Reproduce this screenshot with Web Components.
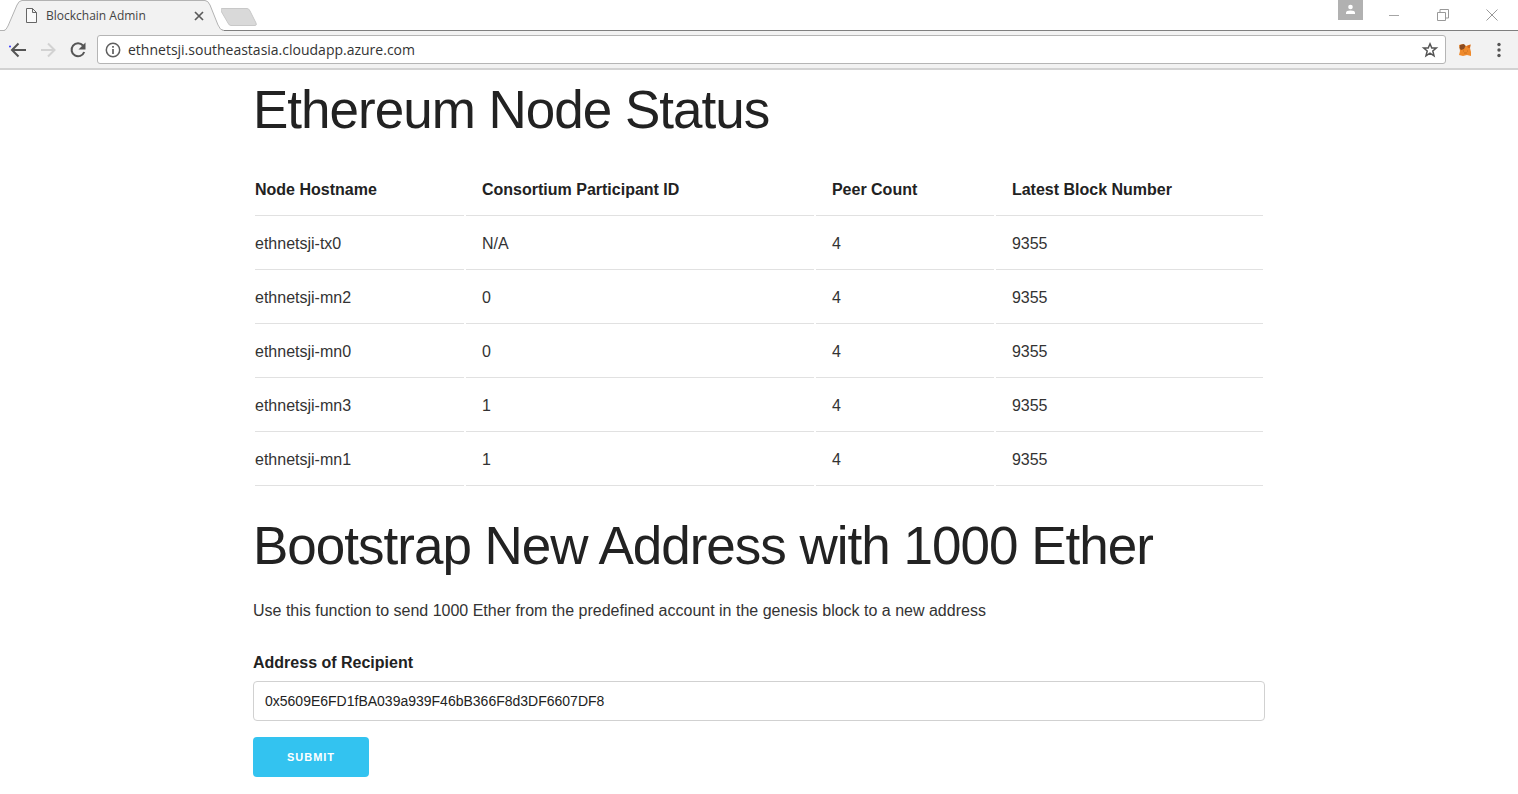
<!DOCTYPE html>
<html lang="en">
<head>
<meta charset="utf-8">
<title>Blockchain Admin</title>
<style>
  body { margin: 0; background: #fff; color: #222; font: 16px/26px "Liberation Sans", Arial, sans-serif; }
</style>
</head>
<body>
<browser-tabs><span>Blockchain Admin</span></browser-tabs>
<browser-toolbar address="ethnetsji.southeastasia.cloudapp.azure.com"></browser-toolbar>
<page-container>
  <section-title>Ethereum Node Status</section-title>
  <node-table></node-table>
  <section-title>Bootstrap New Address with 1000 Ether</section-title>
  <bootstrap-form>Use this function to send 1000 Ether from the predefined account in the genesis block to a new address</bootstrap-form>
</page-container>
<script>
const define = (name, html, setup) => customElements.define(name, class extends HTMLElement {
  constructor() {
    super();
    this.attachShadow({ mode: 'open' }).innerHTML = html;
  }
  connectedCallback() { if (setup) setup(this, this.shadowRoot); }
});

define('browser-tabs', `
<style>
  :host { display: flex; height: 31px; box-sizing: border-box; padding-right: 2px; background: linear-gradient(#7f7f7f, #7f7f7f) bottom / 100% 1px no-repeat #fff; font: 12px/16px "Open Sans", sans-serif; color: #444; }
  button { border: 0; padding: 0; background: none; display: grid; place-items: center; }
  svg { display: block; }
  .tab { position: relative; width: 221px; box-sizing: border-box; padding: 0 16px 0 26px; display: flex; align-items: center; gap: 9px; }
  .shape { position: absolute; left: 0; top: 0; }
  .tab > :not(.shape) { position: relative; }
  .label { flex: 1; }
  .new { height: 31px; }
  .spacer { flex: 1; }
  .profile { width: 25px; height: 20px; background: #b1b1b1; margin-right: 6px; }
  .win { width: 49px; height: 30px; }
</style>
<div class="tab">
  <svg class="shape" width="224" height="31"><path d="M0 31V30.500H4Q7 30 8.500 26L17 5Q19 .500 22 .500H205Q208 .500 210 5L218 26Q220 30.500 224 30.500V31Z" fill="#f2f2f2"/><path d="M0 30.500H4Q6 30.500 8 26L17 5Q19 .500 22 .500H205Q208 .500 210 5L218 25Q220 30.500 224 30.500" fill="none" stroke="#b2b2b2"/></svg>
  <svg width="11" height="15" fill="#fafafa" stroke="#666"><path d="M.500.500H6.500L10.500 4.500V14.500H.500ZM6.500.500V4.500H10.500"/></svg>
  <span class="label"><slot></slot></span>
  <button aria-label="Close tab"><svg width="12" height="12" stroke="#5a5a5a" stroke-width="1.700"><path d="M2 2l8 8M10 2l-8 8"/></svg></button>
</div>
<button class="new" aria-label="New tab"><svg width="38" height="22"><path d="M1 3.500H26Q28 3.500 29 6L35 18Q36 20.500 34 20.500H10Q8 20.500 7 18L0 6Q-1 3.500 1 3.500Z" fill="#d9d9d9" stroke="#c8c8c8"/></svg></button>
<span class="spacer"></span>
<button class="profile" aria-label="Profile"><svg width="11" height="12" fill="#fff"><circle cx="5.500" cy="3" r="2.300"/><path d="M1 10V8.500Q1 6.500 5.500 6.500T10 8.500V10Z"/></svg></button>
<button class="win" aria-label="Minimize"><svg width="12" height="12" stroke="#a5a5a5"><path d="M1 6.500H11"/></svg></button>
<button class="win" aria-label="Restore"><svg width="12" height="12" fill="none" stroke="#999"><path d="M.500 3.500H8.500V11.500H.500ZM3 3V.500H11.500V9H9"/></svg></button>
<button class="win" aria-label="Close"><svg width="12" height="12" stroke="#999"><path d="M.500.500l11 11M11.500.500l-11 11"/></svg></button>
`);

define('browser-toolbar', `
<style>
  :host { display: flex; align-items: center; height: 39px; box-sizing: border-box; padding: 0 2px 0 3px; background: #f2f2f2; border-bottom: 2px solid #d2d2d2; }
  button { border: 0; padding: 0; background: none; width: 30px; height: 30px; display: grid; place-items: center; }
  button.wide { width: 34px; }
  svg { display: block; overflow: visible; }
  .box { flex: 1; display: flex; align-items: center; height: 29px; box-sizing: border-box; border: 1px solid #b5b5b5; border-radius: 3px; background: #fff; margin: 0 2px 0 4px; padding-left: 7px; }
  input { flex: 1; min-width: 0; border: 0; padding: 1px 0 0; margin-left: 7px; background: none; font: 14px/20px "Open Sans", sans-serif; color: #333; outline: 0; }
</style>
<button aria-label="Back"><svg width="16" height="16" fill="none" stroke="#555" stroke-width="2"><path d="M16 8H2.500M8.500 1.500L2 8L8.500 14.500"/><circle cx="0" cy="4.500" r="1" fill="#33f" stroke="none"/></svg></button>
<button aria-label="Forward"><svg width="16" height="16" fill="none" stroke="#d2d2d2" stroke-width="2"><path d="M1 8H14M8 1.500L14.500 8L8 14.500"/></svg></button>
<button aria-label="Reload"><svg width="16" height="16"><path d="M13 3.500A6.500 6.500 0 1 0 14.200 10" fill="none" stroke="#555" stroke-width="2"/><path d="M15.500.500V7.500H8.500Z" fill="#555"/></svg></button>
<div class="box">
  <svg width="16" height="16" fill="none" stroke="#5f5f5f" stroke-width="1.500"><circle cx="8" cy="8" r="6.700"/><path d="M8 7V12M8 4V5.700" stroke-width="1.700"/></svg>
  <input type="text" aria-label="Address" spellcheck="false">
  <button aria-label="Bookmark"><svg width="16" height="16" fill="none" stroke="#555" stroke-width="1.500"><path d="M8 1.800L9.800 6H14.300L10.800 9L12 13.800L8 11.200L4 13.800L5.200 9L1.700 6H6.200Z"/></svg></button>
</div>
<button class="wide" aria-label="Wallet"><svg width="14" height="14"><path d="M1 2L5 1L8 3L12.500 1.500L12 5L13 9V13L9 12L5 13L1 12L2 8Z" fill="#ef8a2c"/><path d="M2 2L6 1L7.500 3L6 6L3 7L1.500 5Z" fill="#8a4b22"/><path d="M9 3L12.500 1.500L12 5L10 5Z" fill="#d4681c"/><path d="M5 8h1M9 8h1M6 10h3" stroke="#c9701f"/></svg></button>
<button class="wide" aria-label="Menu"><svg width="4" height="16" fill="#555"><circle cx="2" cy="2.500" r="1.700"/><circle cx="2" cy="8" r="1.700"/><circle cx="2" cy="13.500" r="1.700"/></svg></button>
`, (host, root) => { root.querySelector('input').value = host.getAttribute('address'); });

define('page-container', `
<style>
  :host { display: block; max-width: 1012px; margin: 0 auto; padding: 8px 0 16px; }
</style>
<slot></slot>`);

define('section-title', `
<style>
  :host { display: block; }
  h1 { margin: 0 0 20px; font-size: 53px; line-height: 64px; font-weight: 400; letter-spacing: -1px; }
</style>
<h1><slot></slot></h1>`);

define('node-table', `
<style>
  :host { display: block; margin-bottom: 26px; }
  table { width: 100%; border-collapse: separate; border-spacing: 2px; }
  th, td { padding: 13px 16px 12px; text-align: left; border-bottom: 1px solid #e1e1e1; }
  td { color: #333; }
  th:first-child, td:first-child { padding-left: 0; }
  th:last-child, td:last-child { padding-right: 0; }
</style>
<table>
  <thead><tr><th>Node Hostname</th><th>Consortium Participant ID</th><th>Peer Count</th><th>Latest Block Number</th></tr></thead>
  <tbody></tbody>
</table>`, (host, root) => {
  const nodes = [
    ['ethnetsji-tx0', 'N/A', 4, 9355],
    ['ethnetsji-mn2', 0, 4, 9355],
    ['ethnetsji-mn0', 0, 4, 9355],
    ['ethnetsji-mn3', 1, 4, 9355],
    ['ethnetsji-mn1', 1, 4, 9355]
  ];
  root.querySelector('tbody').innerHTML = nodes.map(n => '<tr>' + n.map(v => `<td>${v}</td>`).join('') + '</tr>').join('');
});

define('bootstrap-form', `
<style>
  :host { display: block; }
  p { margin: 0 0 26px; color: #333; }
  form { margin: 0; }
  label { display: block; font-weight: 700; margin-bottom: 5px; }
  input { display: block; width: 100%; height: 40px; box-sizing: border-box; margin: 0 0 16px; padding: 6px 11px; border: 1px solid #d1d1d1; border-radius: 4px; background: #fff; color: #222; font: 14px "Liberation Sans", Arial, sans-serif; }
  button { display: block; width: 116px; height: 40px; border: 0; border-radius: 4px; padding: 0; background: #33c3f0; color: #fff; font: 700 11px/40px "Liberation Sans", Arial, sans-serif; letter-spacing: 1px; text-transform: uppercase; }
</style>
<p><slot></slot></p>
<form>
  <label for="recipient">Address of Recipient</label>
  <input id="recipient" type="text" spellcheck="false" value="0x5609E6FD1fBA039a939F46bB366F8d3DF6607DF8">
  <button type="button">Submit</button>
</form>`);
</script>
</body>
</html>
